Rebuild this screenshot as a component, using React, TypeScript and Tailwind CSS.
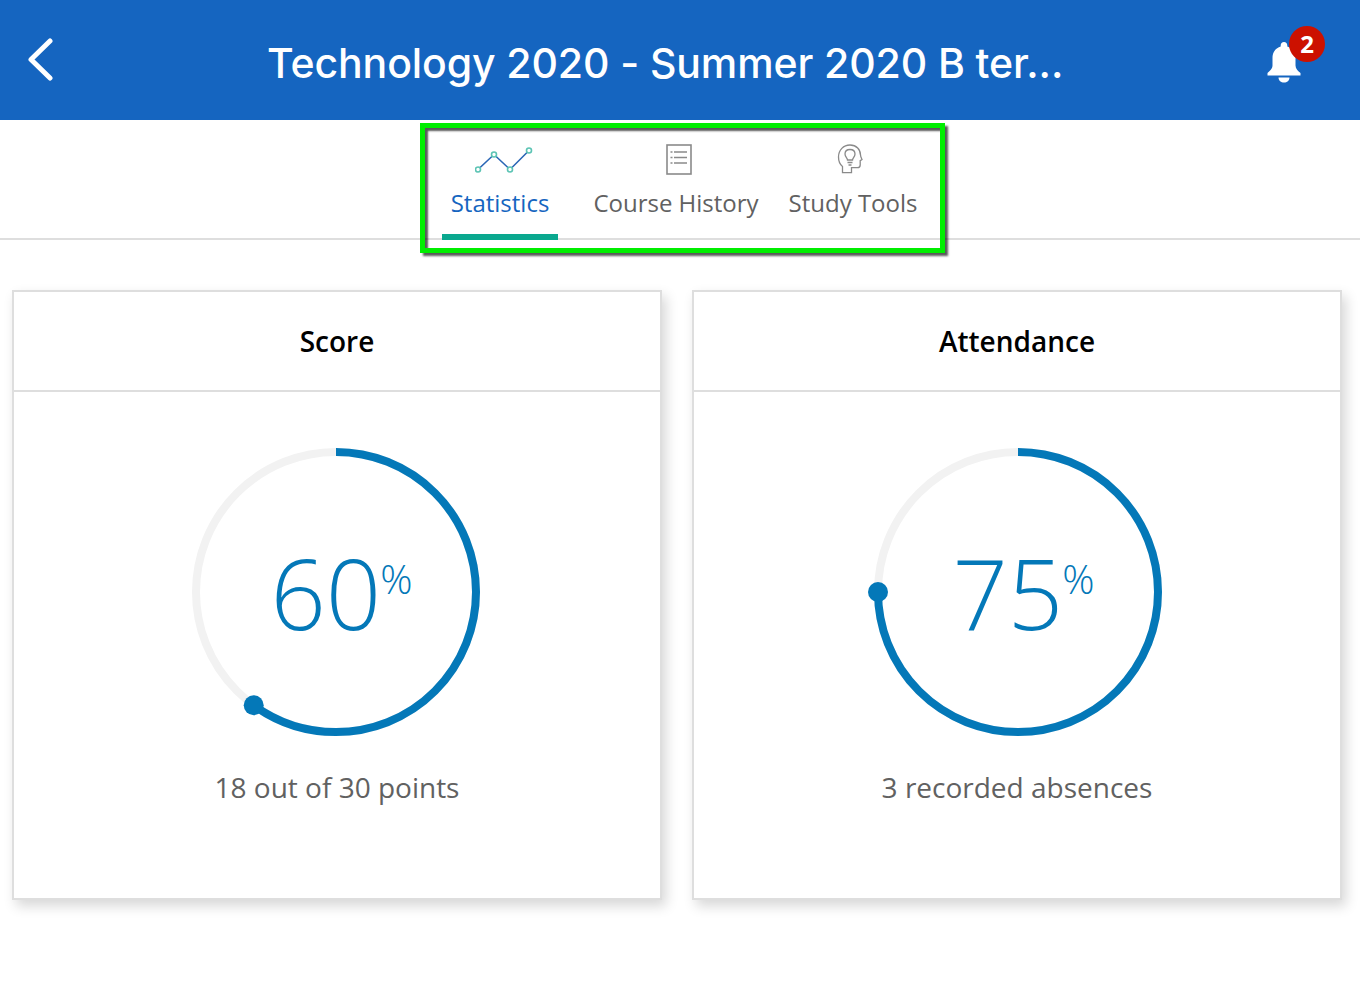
const openSans = { fontFamily: '"Open Sans", sans-serif' };

function StatCard({ title, percent, caption, ringClass }: { title: string; percent: number; caption: string; ringClass: string }) {
  const r = 140;
  const circumference = 2 * Math.PI * r;
  const angle = (percent / 100) * 2 * Math.PI;
  const dotX = 144 + r * Math.sin(angle);
  const dotY = 144 - r * Math.cos(angle);

  return (
    <div className="w-[650px] h-[610px] bg-white border-2 border-[#dedede] shadow-[4px_6px_12px_rgba(0,0,0,0.16)]">
      <div className="h-[100px] border-b-2 border-[#dedede] flex items-center justify-center text-[28px] font-semibold text-black">
        {title}
      </div>
      <div className="flex flex-col items-center pt-[56px]">
        <div className={`relative w-[288px] h-[288px] ${ringClass}`}>
          <svg width="288" height="288" viewBox="0 0 288 288" className="overflow-visible">
            <circle cx="144" cy="144" r={r} fill="none" stroke="#f2f2f2" strokeWidth="8" />
            <circle
              cx="144"
              cy="144"
              r={r}
              fill="none"
              stroke="#0478b8"
              strokeWidth="8"
              strokeDasharray={`${(percent / 100) * circumference} ${circumference}`}
              transform="rotate(-90 144 144)"
            />
            <circle cx={dotX} cy={dotY} r="10" fill="#0478b8" />
          </svg>
          <div className="absolute inset-0 pl-[11px] flex items-center justify-center text-[#0478b8] font-light">
            <span className="text-[97px] leading-none">{percent}</span>
            <span className="text-[40px] leading-none mb-[26px] -ml-[1px]">%</span>
          </div>
        </div>
        <div className="mt-[31px] text-[28px] leading-[40px] text-[#616161]">{caption}</div>
      </div>
    </div>
  );
}

export default function App() {
  return (
    <div className="relative w-[1360px] h-[988px] bg-white overflow-hidden" style={openSans}>
      {/* Header */}
      <div className="h-[120px] bg-[#1565c0] flex items-center text-white">
        <svg width="28" height="44" viewBox="0 0 28 44" className="ml-[27px] shrink-0">
          <path d="M23 3 L4 21.5 L23 40" fill="none" stroke="#fff" strokeWidth="5" strokeLinecap="round" strokeLinejoin="round" />
        </svg>
        <div
          className="ml-[212px] text-[41px] font-medium tracking-[-0.1px] whitespace-nowrap pt-[8px]"
          style={{ fontFamily: 'Inter, sans-serif' }}
        >
          Technology 2020 - Summer 2020 B ter...
        </div>
        <div className="relative ml-auto mr-[58px] mt-[3px]">
          <svg width="36" height="44" viewBox="0 0 36 44" className="block">
            <path
              d="M18 2c-2 0-3.300 1.400-3.300 3.400v1.200C9.500 8.200 6.500 12.500 6.500 18v7.500c0 3-2.500 5.500-5 7.500v2.500h33V33c-2.500-2-5-4.500-5-7.500V18c0-5.500-3-9.800-8.200-11.400V5.400C21.300 3.400 20 2 18 2z"
              fill="#fff"
            />
            <path d="M12.500 37.500h11c0 3-2.500 5-5.500 5s-5.500-2-5.500-5z" fill="#fff" />
          </svg>
          <div className="absolute -top-[14px] left-[23px] w-[36px] h-[36px] rounded-full bg-[#cc1100] flex items-center justify-center text-[24px] font-bold leading-none">
            2
          </div>
        </div>
      </div>

      {/* Tabs */}
      <div className="h-[120px] border-b-2 border-[#dedede] flex pl-[442px]">
        <div className="w-[116px] h-[120px] -mb-[2px] border-b-[6px] border-[#0aa88f] flex flex-col items-center">
          <svg width="60" height="28" viewBox="0 0 60 28" className="mt-[26px] ml-[9px] shrink-0">
            <path d="M3 23.500 L19 8.500 L35 23.500 L54 4.500" fill="none" stroke="#2a66b5" strokeWidth="1.600" />
            <g fill="#fff" stroke="#5cc4b4" strokeWidth="1.600">
              <circle cx="3" cy="23.500" r="2.500" />
              <circle cx="19" cy="8.500" r="2.500" />
              <circle cx="35" cy="23.500" r="2.500" />
              <circle cx="54" cy="4.500" r="2.500" />
            </g>
          </svg>
          <div className="mt-[12px] text-[24px] leading-[34px] text-[#1565c0]">Statistics</div>
        </div>

        <div className="ml-[26px] w-[184px] flex flex-col items-center">
          <svg width="26" height="31" viewBox="0 0 26 31" className="mt-[24px] ml-[6px] shrink-0">
            <rect x="1" y="1" width="24" height="29" fill="none" stroke="#8a8a8a" strokeWidth="1.600" />
            <path d="M4.500 8h2M8 8h13M4.500 13.500h2M8 13.500h13M4.500 19h2M8 19h13" stroke="#8a8a8a" strokeWidth="1.600" />
          </svg>
          <div className="mt-[11px] text-[24px] leading-[34px] text-[#616161] whitespace-nowrap">Course History</div>
        </div>

        <div className="ml-[11px] w-[148px] flex flex-col items-center">
          <svg width="26" height="31" viewBox="0 0 26 31" className="mt-[24px] -ml-[7px] shrink-0">
            <path
              d="M5.500 28.500v-6C3 20.500 1.500 17.500 1.500 13 1.500 6 6.500 1 13 1s10.500 4.500 10.500 10c0 1.500.8 3 1.500 4.500l-1.800 1.200v4.300c0 2-1 2.700-2.700 2.700h-6v5z"
              fill="none"
              stroke="#8a8a8a"
              strokeWidth="1.300"
            />
            <path
              d="M10.500 16c0-2-2.500-3-2.500-6 0-2.800 2.200-4.500 5-4.500s5 1.700 5 4.500c0 3-2.500 4-2.500 6zM10.500 18.500h5M11.500 21h3"
              fill="none"
              stroke="#8a8a8a"
              strokeWidth="1.300"
            />
          </svg>
          <div className="mt-[11px] text-[24px] leading-[34px] text-[#616161] whitespace-nowrap">Study Tools</div>
        </div>
      </div>

      {/* Cards */}
      <div className="flex gap-[30px] pl-[12px] pt-[50px]">
        <StatCard title="Score" percent={60} caption="18 out of 30 points" ringClass="-ml-[2px]" />
        <StatCard title="Attendance" percent={75} caption="3 recorded absences" ringClass="ml-[2px]" />
      </div>

      {/* Green annotation box */}
      <div className="absolute left-[420px] top-[123px] w-[525px] h-[130px] border-[5px] border-[#00ee00] shadow-[3px_3px_2px_rgba(0,0,0,0.65),inset_3px_3px_2px_rgba(0,0,0,0.65)]" />
    </div>
  );
}
